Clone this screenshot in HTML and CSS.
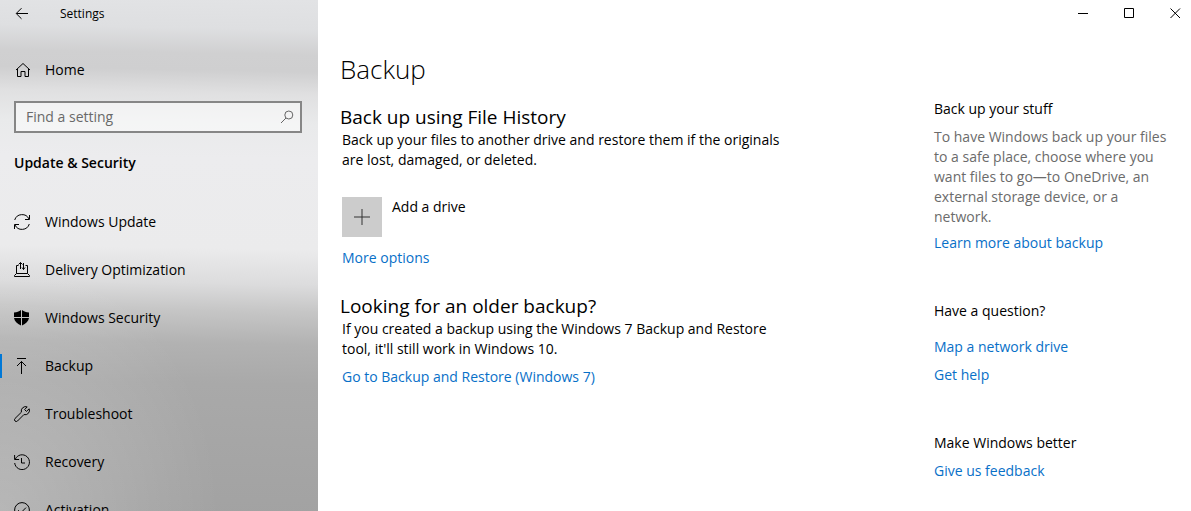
FILE: index.html
```html
<!DOCTYPE html>
<html lang="en">
<head>
<meta charset="utf-8">
<meta name="viewport" content="width=device-width, initial-scale=1">
<title>Settings</title>
<link rel="stylesheet" href="styles.css">
</head>
<body>
<div class="window">
  <div class="sidebar">
    <header class="titlebar">
      <button class="back" type="button" aria-label="Back">
        <svg class="icon" viewBox="0 0 16 16"><path d="M14 7.500H2.500M7.500 2.200 2.200 7.500l5.300 5.300"/></svg>
      </button>
      <span class="app-name">Settings</span>
    </header>
    <a class="nav-link home" href="#home">
      <svg class="icon" viewBox="0 0 16 16"><path d="M2 8 9 1.500 16 8M3.500 7v7.500h3.500V9.500h4v5h3.500V7"/></svg>
      Home
    </a>
    <div class="search">
      <input class="search-input" type="text" placeholder="Find a setting" aria-label="Find a setting">
      <svg class="search-icon" viewBox="0 0 16 16"><circle cx="9.800" cy="6" r="4"/><path d="M7 9 2 14"/></svg>
    </div>
    <h2 class="section-title">Update &amp; Security</h2>
    <nav class="nav" aria-label="Update and Security">
      <a class="nav-link" href="#update">
        <svg class="icon" viewBox="0 0 16 16"><path d="M.7 6A7.700 7.700 0 0 1 15 5M15.300 10A7.700 7.700 0 0 1 1 11"/><path d="M15.500 1v4.500H11M.5 15v-4.500H5"/></svg>
        Windows Update
      </a>
      <a class="nav-link" href="#delivery">
        <svg class="icon" viewBox="0 0 16 16"><path d="M4.500 3.500h-2v8M11.500 3.500h2v8M2.500 11.500h11l2 2v1H.5v-1zM6.500 7V.5M4.500 2.500l2-2 2 2M9.500 1v6.500M8 5.500l1.500 2 1.500-2"/></svg>
        Delivery Optimization
      </a>
      <a class="nav-link" href="#security">
        <svg class="icon icon-solid" viewBox="0 0 16 16"><path d="M7 0V7H0V2.500C3 2.500 5 1.500 7 0zM8 0C10 1.500 12 2.500 15 2.500V7H8zM0 8H7v7.500C3 13.500.5 11.500 0 8zM15 8H8v7.500c4-2 6.500-4 7-7.500z"/></svg>
        Windows Security
      </a>
      <a class="nav-link current" href="#backup" aria-current="page">
        <svg class="icon" viewBox="0 0 16 16"><path d="M3 .5h9M7.500 16V3.500M3 8l4.500-4.500L12 8"/></svg>
        Backup
      </a>
      <a class="nav-link" href="#troubleshoot">
        <svg class="icon" viewBox="0 0 16 16"><path d="M15.200 2.800 12.400 5.400 10.600 3.600 13.200.9A4.400 4.400 0 0 0 7.400 6.200L1 12.500A1.700 1.700 0 0 0 3.500 15L9.900 8.600A4.400 4.400 0 0 0 15.200 2.800z"/></svg>
        Troubleshoot
      </a>
      <a class="nav-link" href="#recovery">
        <svg class="icon" viewBox="0 0 16 16"><path d="M1.200 5.400A7.400 7.400 0 1 1 .7 9M.6 1v4.500h4.500M7.500 4v5h3.500"/></svg>
        Recovery
      </a>
      <a class="nav-link" href="#activation">
        <svg class="icon" viewBox="0 0 16 16"><circle cx="8" cy="8" r="7.400"/><path d="M4.200 8.200 6.800 10.800 12 5.600"/></svg>
        Activation
      </a>
    </nav>
  </div>

  <div class="page">
    <div class="controls">
      <button class="control" type="button" aria-label="Minimize"><svg class="glyph" viewBox="0 0 11 11"><path d="M0 5.500h10"/></svg></button>
      <button class="control" type="button" aria-label="Maximize"><svg class="glyph" viewBox="0 0 11 11"><path d="M.5.5h9v9h-9z"/></svg></button>
      <button class="control" type="button" aria-label="Close"><svg class="glyph" viewBox="0 0 11 11"><path d="M.5.5l9.500 9.500M10 .5.5 10"/></svg></button>
    </div>
    <h1 class="page-title">Backup</h1>
    <div class="columns">
      <main class="primary">
        <section class="block">
          <h2 class="heading">Back up using File History</h2>
          <p class="text">Back up your files to another drive and restore them if the originals are lost, damaged, or deleted.</p>
          <button class="add-drive" type="button">
            <span class="add-tile"><svg class="plus" viewBox="0 0 16 16"><path d="M8 0v16M0 8h16"/></svg></span>
            <span class="add-label">Add a drive</span>
          </button>
          <a class="link" href="#options">More options</a>
        </section>
        <section class="block">
          <h2 class="heading">Looking for an older backup?</h2>
          <p class="text">If you created a backup using the Windows 7 Backup and Restore tool, it'll still work in Windows 10.</p>
          <a class="link" href="#restore">Go to Backup and Restore (Windows 7)</a>
        </section>
      </main>
      <aside class="aside">
        <section class="help">
          <h3 class="help-title">Back up your stuff</h3>
          <p class="help-text">To have Windows back up your files to a safe place, choose where you want files to go—to OneDrive, an external storage device, or a network.</p>
          <a class="help-more" href="#learn">Learn more about backup</a>
        </section>
        <section class="help">
          <h3 class="help-title">Have a question?</h3>
          <a class="help-link question" href="#map">Map a network drive</a>
          <a class="help-link" href="#help">Get help</a>
        </section>
        <section class="help">
          <h3 class="help-title">Make Windows better</h3>
          <a class="help-link" href="#feedback">Give us feedback</a>
        </section>
      </aside>
    </div>
  </div>
</div>
</body>
</html>
```
FILE: styles.css
```css
* { box-sizing: border-box; }

body {
  margin: 0;
  background: #fff;
  color: #000;
  font: 14px/20px "Open Sans", "Noto Sans", sans-serif;
}

h1, h2, h3, p { margin: 0; font-weight: 400; }

button {
  padding: 0;
  border: 0;
  background: none;
  color: inherit;
  font: inherit;
  text-align: left;
}

a { color: #0870c8; text-decoration: none; }

svg { display: block; flex: none; fill: none; stroke: currentColor; }

.window {
  display: grid;
  grid-template-columns: 318px 1fr;
  height: 100vh;
  overflow: hidden;
}

.sidebar {
  overflow: hidden;
  background:
    radial-gradient(ellipse 220px 260px at 0 100%, rgba(255, 255, 255, .22), rgba(255, 255, 255, 0)),
    linear-gradient(181deg, #e2e3e5 0, #dedfe1 30px, #d0d0d1 55px, #cfcfd0 72px, #e0e0e1 95px, #e9eaeb 125px, #ececee 160px, #ebebec 250px, #dcdcdd 285px, #c6c6c6 312px, #b2b2b2 345px, #a9a9a9 385px, #a2a2a2 520px);
}

.titlebar { display: flex; align-items: center; gap: 30px; height: 28px; padding-left: 14px; }
.app-name { font-size: 12px; }
.icon { width: 16px; height: 16px; }
.icon-solid { fill: currentColor; stroke: none; }

.nav-link {
  display: flex;
  align-items: center;
  gap: 15px;
  height: 48px;
  padding-left: 14px;
  color: #000;
}
.home { margin-top: 18px; }
.current { box-shadow: inset 2px 0 #0078d7; }
.nav .current { height: 24px; margin: 12px 0; }

.search { position: relative; margin: 7px 16px 0 14px; }
.search-input {
  display: block;
  width: 100%;
  height: 32px;
  padding: 0 32px 2px 10px;
  border: 2px solid #868686;
  border-radius: 0;
  background: rgba(255, 255, 255, .5);
  color: #000;
  font: inherit;
}
.search-input::placeholder { color: #696969; opacity: 1; }
.search-icon { position: absolute; top: 8px; right: 7px; width: 16px; height: 16px; color: #666; }

.section-title { margin: 18px 14px 23px; font-size: 14px; line-height: 24px; font-weight: 600; }

.page { min-width: 0; }
.controls { display: flex; justify-content: flex-end; height: 28px; margin-right: -7px; }
.control { display: grid; place-items: center; width: 46px; height: 27px; }
.glyph { width: 11px; height: 11px; }

.page-title { margin: 21px 22px 0; font-size: 26px; line-height: 40px; font-weight: 300; }

.columns {
  display: grid;
  grid-template-columns: 1fr 240px;
  gap: 40px;
  padding: 10px 17px 0 24px;
}
.primary { max-width: 454px; padding-top: 6px; }
.block + .block { margin-top: 26px; }
.heading { margin-left: -2px; padding-bottom: 1px; font-size: 19px; line-height: 24px; }
.link { display: block; margin-top: 8px; }

.add-drive { display: flex; gap: 10px; margin: 27px 0 11px; }
.add-drive + .link { margin-top: 0; }
.add-tile { display: grid; place-items: center; width: 40px; height: 40px; background: #ccc; }
.plus { width: 16px; height: 16px; color: #333; }

.help + .help { margin-top: 48px; }
.help-title { font-size: 14px; line-height: 20px; }
.help-text { margin: 8px 0 6px; color: #6b6b6b; }
.help-more { display: block; }
.help-link { display: block; margin-top: 8px; }
.question { margin-top: 16px; }
```
